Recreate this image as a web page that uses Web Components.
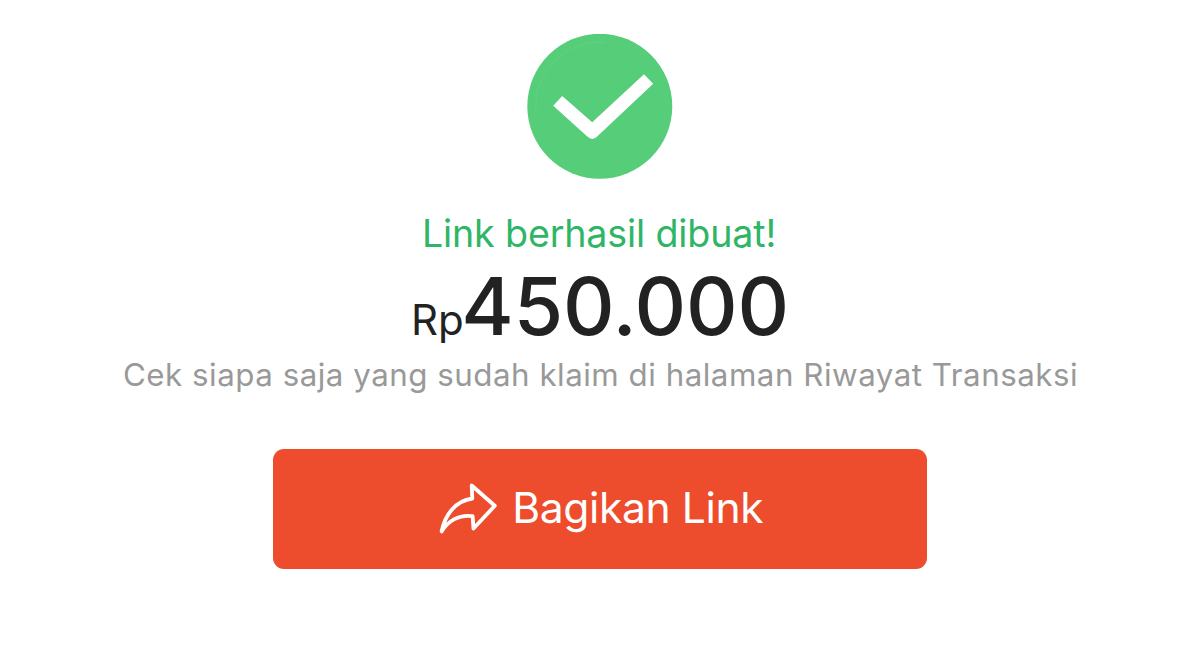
<!DOCTYPE html>
<html lang="id">
<head>
<meta charset="utf-8">
<title>Link berhasil dibuat</title>
<style>
html,body{margin:0;background:#fff}
body{font-family:Inter,"Liberation Sans",sans-serif}
</style>
</head>
<body>
<result-page>
<success-mark></success-mark>
<result-title>Link berhasil dibuat!</result-title>
<money-amount currency="Rp">450.000</money-amount>
<result-note>Cek siapa saja yang sudah klaim di halaman Riwayat Transaksi</result-note>
<share-button>Bagikan Link</share-button>
</result-page>
<script>
const define = (name, html) => {
  const t = document.createElement('template');
  t.innerHTML = html;
  customElements.define(name, class extends HTMLElement {
    constructor() {
      super();
      this.attachShadow({mode: 'open'}).appendChild(t.content.cloneNode(true));
    }
    connectedCallback() {
      const c = this.shadowRoot.querySelector('.currency');
      if (c) c.textContent = this.getAttribute('currency');
    }
  });
};
define('result-page', `<style>
:host{display:flex;flex-direction:column;align-items:center;box-sizing:border-box;height:645px;padding-top:34px;overflow:hidden;background:#fff}
</style><slot></slot>`);
define('success-mark', `<style>
:host{display:block;width:146px;height:145px;margin-bottom:30px}svg{display:block}
</style><svg width="146" height="145" viewBox="0 0 146 145">
<circle cx="72.8" cy="72.3" r="72.5" fill="#55cd79"/>
<path d="M9 78A64 64 0 0 1 78 8.5" fill="none" stroke="#66d286" stroke-width="1" opacity=".7"/>
<path fill="#fff" d="M26.2 71.7 35.2 62 65.2 88.3 117 40.3 126.2 49.7 69.9 102.8Q65.4 107 60.6 102.8Z"/>
</svg>`);
define('result-title', `<style>
:host{display:block;font-size:37.6px;font-weight:380;line-height:50px;letter-spacing:-.13px;padding-right:2px;color:#2fb566;white-space:nowrap}
</style><slot></slot>`);
define('money-amount', `<style>
:host{display:flex;align-items:baseline;height:90px;line-height:90px;margin-top:2px;color:#222;white-space:nowrap}
.currency{font-size:42px}
.value{font-size:80px;font-weight:540;letter-spacing:-.1px;margin-left:-2.5px}
</style><span class="currency"></span><span class="value"><slot></slot></span>`);
define('result-note', `<style>
:host{display:block;font-size:31.3px;line-height:40px;letter-spacing:.51px;margin-top:4px;padding-left:1px;color:#999;white-space:nowrap}
</style><slot></slot>`);
define('share-button', `<style>
:host{display:block;margin-top:53.5px}
button{display:flex;align-items:center;justify-content:center;gap:15.5px;box-sizing:border-box;width:654px;height:120px;padding:0 0 1px 2px;border:0;border-radius:11px;background:#ee4d2d;color:#fff;font:380 42.6px/60px Inter,"Liberation Sans",sans-serif;letter-spacing:-.4px;white-space:nowrap}
svg{display:block;flex:none}
</style><button><svg width="58" height="51" viewBox="0 0 58 51" fill="none" stroke="#fff" stroke-width="3.8" stroke-linejoin="round">
<path d="M2.6 48.5C6 32 16 18 33.3 15.5L32.7 2.5 55.8 22.8 34.5 45.5 33.6 33.2C20 31 9 38 2.6 48.5Z"/>
</svg><span><slot></slot></span></button>`);
</script>
</body>
</html>
